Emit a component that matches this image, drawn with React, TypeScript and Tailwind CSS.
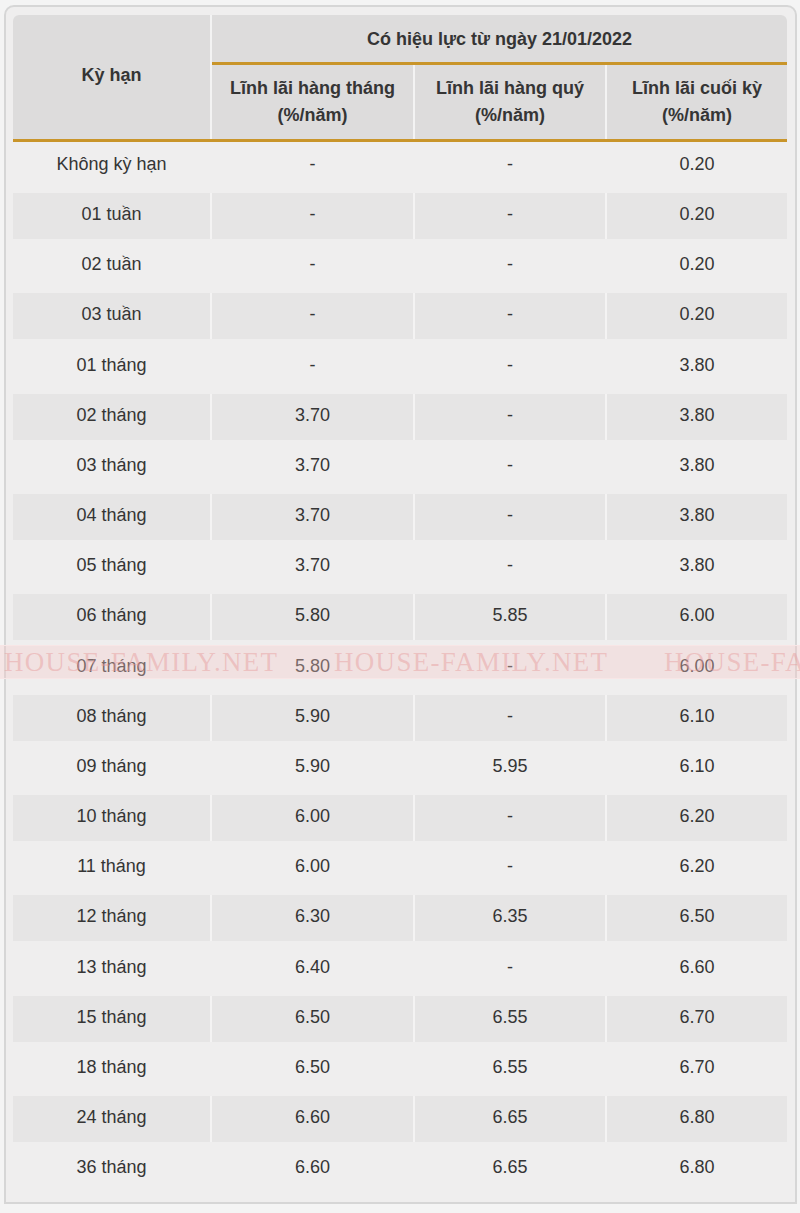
const rows: [string, string, string, string][] = [
  ["Không kỳ hạn", "-", "-", "0.20"],
  ["01 tuần", "-", "-", "0.20"],
  ["02 tuần", "-", "-", "0.20"],
  ["03 tuần", "-", "-", "0.20"],
  ["01 tháng", "-", "-", "3.80"],
  ["02 tháng", "3.70", "-", "3.80"],
  ["03 tháng", "3.70", "-", "3.80"],
  ["04 tháng", "3.70", "-", "3.80"],
  ["05 tháng", "3.70", "-", "3.80"],
  ["06 tháng", "5.80", "5.85", "6.00"],
  ["07 tháng", "5.80", "-", "6.00"],
  ["08 tháng", "5.90", "-", "6.10"],
  ["09 tháng", "5.90", "5.95", "6.10"],
  ["10 tháng", "6.00", "-", "6.20"],
  ["11 tháng", "6.00", "-", "6.20"],
  ["12 tháng", "6.30", "6.35", "6.50"],
  ["13 tháng", "6.40", "-", "6.60"],
  ["15 tháng", "6.50", "6.55", "6.70"],
  ["18 tháng", "6.50", "6.55", "6.70"],
  ["24 tháng", "6.60", "6.65", "6.80"],
  ["36 tháng", "6.60", "6.65", "6.80"],
];

const cols = "grid grid-cols-[197px_201px_190px_180px] gap-x-[2px]";

export default function App() {
  return (
    <div className="relative min-h-screen bg-[#f4f4f4] pt-[5px] pl-[4px] pr-[3px] pb-[9px] font-['Liberation_Sans',Arial,sans-serif] text-[18px] text-[#353535]">
      <div className="rounded-t-[10px] border-2 border-[#d6d6d6] bg-[#efeeee] pt-[8px] pl-[7px] pr-[8px] pb-[10px]">
        {/* header */}
        <div className="overflow-hidden rounded-t-[6px] bg-[#f3f3f3]">
          <div className={cols}>
            <div className="row-span-2 flex items-center justify-center bg-[#dddcdc] pb-[4px] font-bold">
              Kỳ hạn
            </div>
            <div className="col-span-3 flex flex-col bg-[#dddcdc]">
              <div className="flex h-[47px] items-center justify-center pt-[1px] font-bold">
                Có hiệu lực từ ngày 21/01/2022
              </div>
              <div className="h-[3px] bg-[#c9952a]" />
            </div>
            {["Lĩnh lãi hàng tháng", "Lĩnh lãi hàng quý", "Lĩnh lãi cuối kỳ"].map((t) => (
              <div
                key={t}
                className="flex h-[74px] flex-col items-center justify-center bg-[#dddcdc] font-bold leading-[27px]"
              >
                <span>{t}</span>
                <span>(%/năm)</span>
              </div>
            ))}
          </div>
          <div className="h-[3px] bg-[#c9952a]" />
        </div>

        {/* body */}
        <div className="mt-[1px] flex flex-col gap-y-[4.17px]">
          {rows.map((r, i) => {
            const dark = i % 2 === 1;
            return (
              <div key={r[0]} className={`${cols} ${dark ? "bg-[#f4f3f3]" : ""}`}>
                {r.map((c, j) => (
                  <div
                    key={j}
                    className={`flex h-[46px] items-center justify-center pb-[3px] ${
                      dark ? "bg-[#e6e5e5]" : "bg-[#efeeee]"
                    }`}
                  >
                    {c}
                  </div>
                ))}
              </div>
            );
          })}
        </div>
      </div>

      {/* watermark band */}
      <div className="pointer-events-none absolute left-0 right-0 top-[645px] h-[34px] overflow-hidden border-y border-[#f8e6e6] bg-[#f5c9c9]/35">
        {[4, 334, 664].map((x) => (
          <span
            key={x}
            className="absolute top-[0px] whitespace-nowrap font-['Liberation_Serif',serif] text-[27px] leading-[33px] tracking-[1.3px] text-[#e79a9a]/45"
            style={{ left: x }}
          >
            HOUSE-FAMILY.NET
          </span>
        ))}
      </div>
    </div>
  );
}
